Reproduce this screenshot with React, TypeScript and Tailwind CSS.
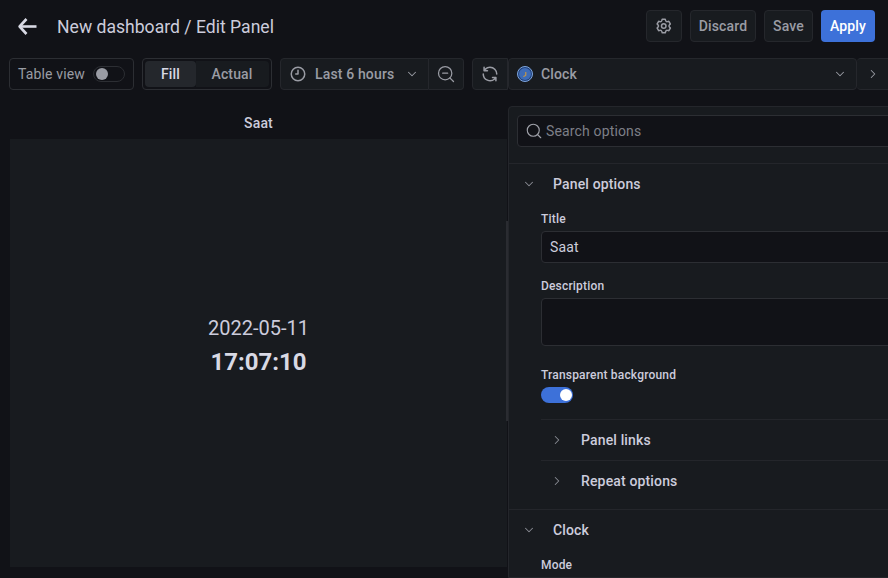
import { ChevronDown, ChevronRight, Search, ZoomOut } from "lucide-react";

function BackArrow() {
  return (
    <svg viewBox="0 0 20 20" className="mt-[7px] h-5 w-5 shrink-0" fill="none" stroke="#d8d9e4" strokeWidth="2.6" strokeLinejoin="round">
      <path d="M9.5 2 L2.6 9.5 L9.5 17" />
      <path d="M3 9.5 H19.5" />
    </svg>
  );
}

function CogIcon() {
  return (
    <svg viewBox="0 0 24 24" className="h-[18px] w-[18px]" fill="currentColor">
      <path d="M19.9,12.66a1,1,0,0,1,0-1.32L21.18,9.9a1,1,0,0,0,.12-1.17l-2-3.46a1,1,0,0,0-1.07-.48l-1.88.38a1,1,0,0,1-1.15-.66l-.61-1.83A1,1,0,0,0,13.64,2h-4a1,1,0,0,0-1,.68L8.08,4.51a1,1,0,0,1-1.15.66L5,4.79A1,1,0,0,0,4,5.27L2,8.73A1,1,0,0,0,2.1,9.9l1.27,1.44a1,1,0,0,1,0,1.32L2.1,14.1A1,1,0,0,0,2,15.27l2,3.46a1,1,0,0,0,1.07.48l1.88-.38a1,1,0,0,1,1.15.66l.61,1.83a1,1,0,0,0,1,.68h4a1,1,0,0,0,.95-.68l.61-1.83a1,1,0,0,1,1.15-.66l1.88.38a1,1,0,0,0,1.07-.48l2-3.46a1,1,0,0,0-.12-1.17ZM18.41,14l.8.9-1.28,2.22-1.18-.24a3,3,0,0,0-3.45,2L12.92,20H10.36L10,18.86a3,3,0,0,0-3.45-2l-1.18.24L4.07,14.89l.8-.9a3,3,0,0,0,0-4l-.8-.9L5.35,6.89l1.18.24a3,3,0,0,0,3.45-2L10.36,4h2.56l.38,1.14a3,3,0,0,0,3.45,2l1.18-.24,1.28,2.22-.8.9A3,3,0,0,0,18.41,14ZM11.64,8a4,4,0,1,0,4,4A4,4,0,0,0,11.64,8Zm0,6a2,2,0,1,1,2-2A2,2,0,0,1,11.64,14Z" />
    </svg>
  );
}

function ClockIcon() {
  return (
    <svg viewBox="0 0 24 24" className="h-[18px] w-[18px] shrink-0" fill="currentColor">
      <path d="M12,2A10,10,0,1,0,22,12,10,10,0,0,0,12,2Zm0,18a8,8,0,1,1,8-8A8,8,0,0,1,12,20Zm0-14a1,1,0,0,0-1,1v4H9a1,1,0,0,0,0,2h3a1,1,0,0,0,1-1V7A1,1,0,0,0,12,6Z" />
    </svg>
  );
}

function SyncIcon() {
  return (
    <svg viewBox="0 0 24 24" className="h-[18px] w-[18px]" fill="currentColor">
      <path d="M19.91,15.51H15.38a1,1,0,0,0,0,2h2.4A8,8,0,0,1,4,12a1,1,0,0,0-2,0,10,10,0,0,0,16.88,7.23V21a1,1,0,0,0,2,0V16.5A1,1,0,0,0,19.91,15.51ZM12,2A10,10,0,0,0,5.12,4.77V3a1,1,0,0,0-2,0V7.5a1,1,0,0,0,1,1h4.5a1,1,0,0,0,0-2H6.22A8,8,0,0,1,20,12a1,1,0,0,0,2,0A10,10,0,0,0,12,2Z" />
    </svg>
  );
}

function ClockLogo() {
  return (
    <svg viewBox="0 0 16 16" className="h-4 w-4 shrink-0">
      <circle cx="8" cy="8" r="7.5" fill="#1f3f78" stroke="#7ea6de" strokeWidth="1" />
      <circle cx="8" cy="8" r="6" fill="#3e6cb8" />
      <path d="M8.8 6v3.6L6.4 10.4" fill="none" stroke="#e0a030" strokeWidth="1" />
    </svg>
  );
}

function ToolbarButton({ children, className = "" }: { children: React.ReactNode; className?: string }) {
  return (
    <div className={`flex h-8 shrink-0 items-center justify-center rounded-sm border border-[#25272c] bg-[#181b1f] text-sm font-medium tracking-[0.15px] text-[#9a9ca4] ${className}`}>
      {children}
    </div>
  );
}

function SubSection({ title }: { title: string }) {
  return (
    <div className="ml-8 flex h-[41px] items-center border-t border-[#24262b] pl-[9px]">
      <ChevronRight size={14} className="text-[#8a8c94]" strokeWidth={1.75} />
      <span className="ml-[17px] text-sm font-medium tracking-[0.15px] text-[#ccccdc]">{title}</span>
    </div>
  );
}

function OptionsPane() {
  return (
    <div className="w-[600px] shrink-0 rounded-t-sm border border-[#24262b] bg-[#181b1f]">
      <div className="border-b border-[#24262b] px-2 pt-2 pb-4">
        <div className="flex h-8 items-center gap-[3px] rounded-sm border border-[#2c2e33] bg-[#111217] pl-[7px] text-sm tracking-[0.15px] text-[#7d7f87]">
          <Search size={18} className="text-[#a0a2aa]" strokeWidth={1.5} />
          <span>Search options</span>
        </div>
      </div>

      <div className="flex h-[39px] items-center pl-[13px]">
        <ChevronDown size={14} className="text-[#8a8c94]" strokeWidth={1.75} />
        <span className="ml-[17px] text-sm font-medium tracking-[0.15px] text-[#ccccdc]">Panel options</span>
      </div>
      <div className="pl-8">
        <label className="mt-[7px] block text-xs leading-[18px] font-medium tracking-[0.18px] text-[#ccccdc]">Title</label>
        <div className="mt-[3px] flex h-8 items-center rounded-sm border border-[#2c2e33] bg-[#111217] px-2 text-sm tracking-[0.15px] text-[#ccccdc]">
          Saat
        </div>
        <label className="mt-[14px] block text-xs leading-[18px] font-medium tracking-[0.18px] text-[#ccccdc]">Description</label>
        <div className="mt-[3px] h-12 rounded-sm border border-[#2c2e33] bg-[#111217]" />
        <label className="mt-[20px] block text-xs leading-[18px] font-medium tracking-[0.18px] text-[#ccccdc]">Transparent background</label>
        <div className="mt-[3px] mb-4 flex h-4 w-8 items-center justify-end rounded-full bg-[#3d71d9] pr-[1px]">
          <span className="h-3 w-3 rounded-full bg-white" />
        </div>
      </div>
      <SubSection title="Panel links" />
      <SubSection title="Repeat options" />
      <div className="mt-2 flex h-10 items-center border-t border-[#24262b] pl-[13px]">
        <ChevronDown size={14} className="text-[#8a8c94]" strokeWidth={1.75} />
        <span className="ml-[17px] text-sm font-medium tracking-[0.15px] text-[#ccccdc]">Clock</span>
      </div>
      <div className="pl-8">
        <label className="mt-[7px] block text-xs leading-[18px] font-medium tracking-[0.18px] text-[#ccccdc]">Mode</label>
        <div className="mt-1 h-8 w-[260px] rounded-sm border border-[#2c2e33] bg-[#181b1f]" />
      </div>
    </div>
  );
}

export default function App() {
  return (
    <div className="flex h-[578px] w-[888px] flex-col overflow-hidden bg-[#111217] font-['Roboto',sans-serif] text-[#ccccdc]">
      {/* top bar */}
      <header className="flex h-[58px] shrink-0 items-start pt-[10px] pl-[17px]">
        <BackArrow />
        <h1 className="ml-[20px] pt-px text-[17.6px] leading-8 text-[#ccccdc]">New dashboard / Edit Panel</h1>
        <div className="ml-auto flex items-center gap-2 pr-[13px]">
          <ToolbarButton className="w-9">
            <CogIcon />
          </ToolbarButton>
          <ToolbarButton className="w-[66px]">Discard</ToolbarButton>
          <ToolbarButton className="w-[49px]">Save</ToolbarButton>
          <div className="flex h-8 w-[54px] items-center justify-center rounded-sm bg-[#3d71d9] text-sm font-medium tracking-[0.15px] text-white">Apply</div>
        </div>
      </header>

      {/* toolbar */}
      <div className="flex h-8 shrink-0 items-center pl-[9px]">
        <div className="flex h-8 w-[125px] shrink-0 items-center gap-2 rounded-sm border border-[#2c2e33] pl-2 text-sm tracking-[0.15px] text-[#9a9ca4]">
          <span>Table view</span>
          <div className="flex h-4 w-8 items-center rounded-full border border-[#2c2e33] bg-[#111217] pl-[2px]">
            <span className="h-3 w-3 rounded-full bg-[#9a9ca4]" />
          </div>
        </div>
        <div className="ml-2 flex h-8 w-[130px] shrink-0 items-center rounded-sm border border-[#2c2e33] p-[2px] text-sm font-medium tracking-[0.15px]">
          <div className="flex h-[26px] w-[51px] items-center justify-center rounded-sm bg-[#24272c] text-[#d8d9e4]">Fill</div>
          <div className="flex h-[26px] flex-1 items-center justify-center rounded-r-sm bg-[#181b1f] pr-[1px] text-[#9a9ca4]">Actual</div>
        </div>
        <div className="ml-2 flex shrink-0">
          <ToolbarButton className="w-[149px] justify-start rounded-r-none pl-2">
            <ClockIcon />
            <span className="ml-2">Last 6 hours</span>
            <ChevronDown size={14} strokeWidth={1.75} className="ml-[11px]" />
          </ToolbarButton>
          <ToolbarButton className="w-[35px] rounded-l-none border-l-0">
            <ZoomOut size={20} strokeWidth={1.5} />
          </ToolbarButton>
        </div>
        <ToolbarButton className="ml-2 w-9 rounded-r-none">
          <SyncIcon />
        </ToolbarButton>
        <ToolbarButton className="w-[349px] justify-start rounded-none pl-2">
          <ClockLogo />
          <span className="ml-2">Clock</span>
          <ChevronDown size={14} strokeWidth={1.75} className="mr-[9px] ml-auto" />
        </ToolbarButton>
        <ToolbarButton className="w-[40px] justify-start rounded-none border-l-0 pl-[9px]">
          <ChevronRight size={14} strokeWidth={1.75} />
        </ToolbarButton>
      </div>

      {/* body */}
      <div className="flex min-h-0 flex-1 pt-4">
        <section className="relative flex w-[508px] shrink-0 flex-col pr-px pl-[10px]">
          <div className="flex h-[33px] shrink-0 items-center justify-center text-sm font-medium tracking-[0.15px] text-[#ccccdc]">Saat</div>
          <div className="flex h-[428px] flex-col items-center justify-center bg-[#181b1f] pb-3">
            <div className="text-xl leading-[26px] text-[#ccccdc]">2022-05-11</div>
            <div className="mt-[4px] text-2xl leading-[34px] font-bold text-[#d8d9e4]">17:07:10</div>
          </div>
          {/* pane splitter handle */}
          <div className="absolute top-[115px] right-0 h-[200px] w-[2px] bg-[#2a2c31]" />
        </section>
        <OptionsPane />
      </div>
    </div>
  );
}
